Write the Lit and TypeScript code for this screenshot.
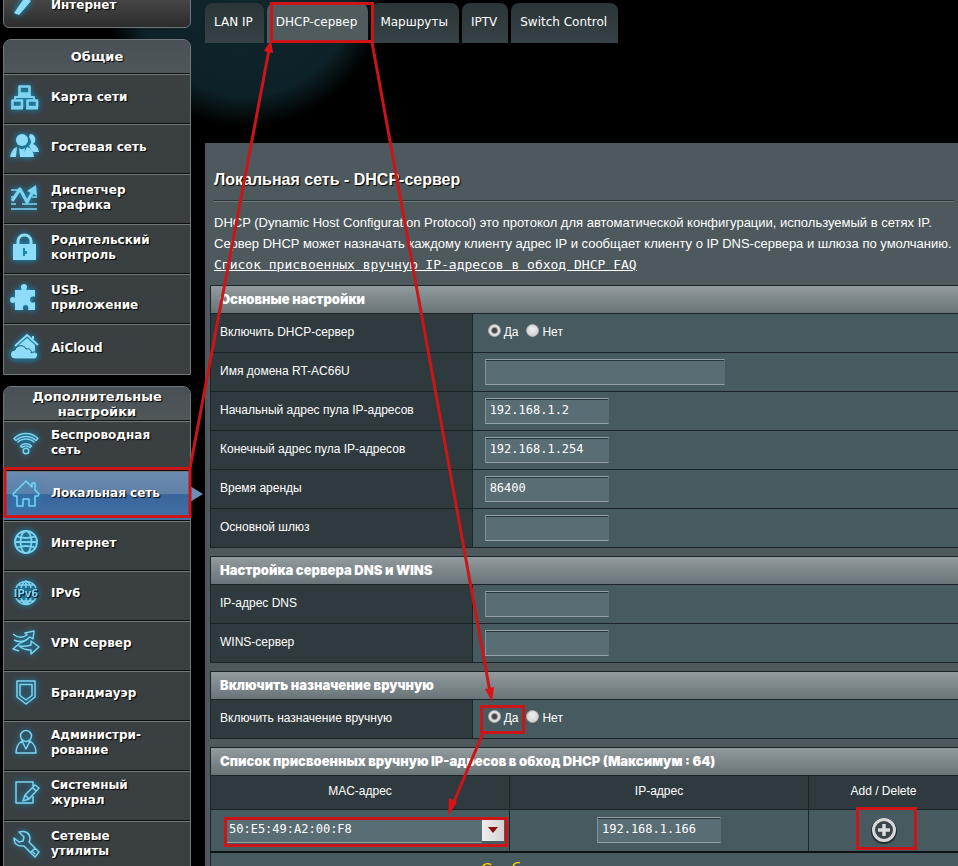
import { LitElement, html, svg, css, nothing } from "lit";
import { customElement } from "lit/decorators.js";
import { classMap } from "lit/directives/class-map.js";

const stroke = (body: unknown) => html`<svg class="icon line" viewBox="0 0 30 30" aria-hidden="true">${body}</svg>`;
const solid = (body: unknown) => html`<svg class="icon solid" viewBox="0 0 30 30" aria-hidden="true">${body}</svg>`;

const icons: Record<string, unknown> = {
  wand: solid(svg`<path d="M4 23 15 7l6 4-12 14z"/>`),
  map: stroke(svg`<path stroke-width="2.6" d="M9.500 3.500h10v7h-10zM2.500 17.500h9.500v6.500H2.500zM17.500 17.500h9.500v6.500h-9.500z"/><path stroke-width="2" d="M14.500 11v4M5 16.500v-2.500h19v2.500M1 25.500h12M16 25.500h12M8 12h13"/>`),
  guests: solid(svg`<path d="M20 1a5.500 5.500 0 0 1 3 10q5 2 6 8h-6l-4-6q4-4 0-9z"/><circle cx="12" cy="7" r="6"/><path d="M0 24q2-9 7-10l-1 10zM24 24q-1-9-7-10l-5 10z"/><path d="M9 15l3 1.500 3-1.500-1 9h-4z"/>`),
  traffic: stroke(svg`<path stroke-width="1.500" d="M1 7h7M19 7h3M1 14h4M1 21h5M12 21h15M1 26h26M22 14h5"/><path stroke-width="3.200" d="M2 18 10 6l7 13 8-14"/><path fill="currentColor" stroke="none" d="M17 8l9-6 1 11z"/>`),
  lock: solid(svg`<path fill="none" stroke="currentColor" stroke-width="3" d="M8 14V8a6.500 6 0 0 1 13 0v6"/><path fill-rule="evenodd" d="M3 11h23v16H3zM13 15v8h2v-2h2v-3h-2v-3z"/>`),
  puzzle: solid(svg`<path d="M5 7h7c-2-3-1-6 2-6s4 3 2 6h9v7c-3-1-5 0-5 2.500s2 4.500 5 2.500v8h-7c1-3 0-5-2.500-5s-3 2-2 5H5v-8c-2 2-5 1-5-2s3-4 5-2z"/>`),
  cloud: solid(svg`<path fill="none" stroke="currentColor" stroke-width="2" d="M5 13 17 2l11 10M23 3v3"/><path d="M9 12l8-7 8 7v8H9z"/><path stroke="#1d5870" d="M5 26c-6 0-6-9 0-9 1-5 9-6 11-1 4-1 6 2 5 4 5-3 8 1 6 4-1 2-2 2-4 2z"/>`),
  wifi: stroke(svg`<circle cx="15" cy="23" r="2.800"/><path d="M9.500 18a8 8 0 0 1 11 0l-1.500 1.500a6 6 0 0 0-8 0zM3 10.500a17 17 0 0 1 24 0l-2 2a14.500 14.500 0 0 0-20 0zM6.500 14.500a12 12 0 0 1 17 0"/>`),
  home: stroke(svg`<path d="M2 16 15 3l6 6V5h3v7l4 4-1 2h-3v10h-6v-7h-6v7H6V18H3z"/>`),
  globe: stroke(svg`<g stroke-width="1.800"><circle cx="15" cy="14" r="11"/><ellipse cx="15" cy="14" rx="5.500" ry="11"/><path d="M4 14h22M6 8.500q9 3 18 0M6 19.500q9-3 18 0"/></g>`),
  ipv6: stroke(svg`<path d="M5 10a11 11 0 0 1 20 0M5 20a11 11 0 0 0 20 0M15 3v7M15 20v6M10 10q1-5 5-7 4 2 5 7M10 20q1 4 5 6 4-2 5-6M7 7h16M7 23h16"/><text x="15" y="19" class="tiny" text-anchor="middle">IPv6</text>`),
  vpn: stroke(svg`<path d="M2 6q7 6 14 1l-2-2 9-2-1 8-3-2q-8 7-16 3M28 19l-8 7v-4q-7 0-12-4 6 1 12-1v-4zM9 15l-7 6 6 2M9 15q4-1 8-4"/>`),
  shield: stroke(svg`<path d="M6 3h18v16l-9 7-9-7z"/><path d="M9 6.500h12v11L15 22l-6-4.500z"/>`),
  admin: stroke(svg`<circle cx="15" cy="8" r="5.500"/><path d="M11 13q-6 4-6 12h20q0-8-6-12l-4 8z"/>`),
  log: stroke(svg`<path d="M22 18v7H5V4h17v4"/><path d="M12 23l2-6L24 7l4 3-10 11zM14 17l4 4M21 9l4 4"/>`),
  tools: stroke(svg`<path d="M3 9l5 4 4-1 1-4-5-5q10-2 11 6 0 3-1 4l10 10-4 5-11-11Q3 18 3 9zM19 24l5-5M21 22l3 3"/>`),
};

interface Item { label: string; icon: string; active?: boolean }

const general: Item[] = [
  { label: "Карта сети", icon: "map" },
  { label: "Гостевая сеть", icon: "guests" },
  { label: "Диспетчер трафика", icon: "traffic" },
  { label: "Родительский контроль", icon: "lock" },
  { label: "USB-приложение", icon: "puzzle" },
  { label: "AiCloud", icon: "cloud" },
];

const advanced: Item[] = [
  { label: "Беспроводная сеть", icon: "wifi" },
  { label: "Локальная сеть", icon: "home", active: true },
  { label: "Интернет", icon: "globe" },
  { label: "IPv6", icon: "ipv6" },
  { label: "VPN сервер", icon: "vpn" },
  { label: "Брандмауэр", icon: "shield" },
  { label: "Администри-рование", icon: "admin" },
  { label: "Системный журнал", icon: "log" },
  { label: "Сетевые утилиты", icon: "tools" },
];

@customElement("side-menu")
class SideMenu extends LitElement {
  static styles = css`
    :host { display: block; width: 188px; flex: none; margin: -22px 0 0 3px; font: bold 12px/15px "DejaVu Sans", Verdana, sans-serif; }
    * { box-sizing: border-box; }
    .group { margin-bottom: 11px; border: 1px solid #70787b; border-radius: 8px 8px 0 0; background: #3a3f42; }
    .quick { height: 50px; border-radius: 6px; background: linear-gradient(#5a5a5a, #2c2c2c); }
    .title { margin: 0; height: 34px; display: flex; align-items: center; justify-content: center; text-align: center; padding: 0 16px; border-radius: 8px 8px 0 0; border-bottom: 1px solid #111; background: linear-gradient(#485055, #50575a); color: #fff; font-size: 13px; text-shadow: 1px 1px 1px #000; }
    .item { position: relative; height: 50px; display: flex; align-items: center; gap: 11px; padding: 0 8px 3px 6px; border-top: 1px solid #70787b; border-bottom: 1px solid #0c0f10; color: #fff; text-decoration: none; text-shadow: 1px 1px 1px #000; }
    .item:last-child { border-bottom: 0; }
    .quick .item { height: 48px; border: 0; padding: 4px 8px 0 6px; }
    .advanced .item { padding: 0 8px 6px 7px; gap: 10px; }
    .active { background: linear-gradient(#6c8bb0 0, #5f80a8 46%, #37659c 47%, #4470a5 100%); }
    .active::after { content: ""; position: absolute; left: 100%; top: 14px; border: 8px solid transparent; border-left: 13px solid #6a8fbb; }
    .label { width: 116px; overflow-wrap: break-word; }
    .icon { width: 30px; height: 30px; flex: none; filter: drop-shadow(0 0 3px #0aa0dc); overflow: visible; }
    .line { fill: none; stroke: #7fd3ef; stroke-width: 1.5; color: #7fd3ef; stroke-linejoin: round; }
    .solid { fill: #8fdcf8; color: #8fdcf8; }
    .tiny { font: bold 10px "DejaVu Sans", sans-serif; fill: #7fd3ef; stroke: none; }
  `;
  item(i: Item) {
    return html`<a href="#" class=${classMap({ item: true, active: !!i.active })} aria-current=${i.active ? "page" : nothing}>${icons[i.icon]}<span class="label">${i.label}</span></a>`;
  }
  render() {
    return html`
      <div class="group quick">${this.item({ label: "Интернет", icon: "wand" })}</div>
      <nav class="group"><h2 class="title">Общие</h2>${general.map((i) => this.item(i))}</nav>
      <nav class="group advanced"><h2 class="title">Дополнительные настройки</h2>${advanced.map((i) => this.item(i))}</nav>
    `;
  }
}

@customElement("dhcp-page")
class DhcpPage extends LitElement {
  static styles = css`
    :host { display: block; flex: 1; min-width: 0; color: #fff; font: 12px/15px "Liberation Sans", Arial, sans-serif; }
    * { box-sizing: border-box; }
    .tabs { display: flex; gap: 3px; padding-top: 3px; margin-bottom: 100px; }
    .tab { height: 40px; padding: 0 11px 2px 9px; display: flex; align-items: center; border-radius: 8px 8px 0 0; background: linear-gradient(#2b3538, #364246); color: #fff; text-decoration: none; font: 12px "DejaVu Sans", Verdana, sans-serif; }
    .current { background: #505b5e; }
    .panel { background: #4d595d; padding: 26px 0 60px 5px; }
    .title { margin: 0 4px; padding-bottom: 10px; font-size: 16px; line-height: 21px; text-shadow: 1px 1px 1px #000; border-bottom: 1px solid #2d3639; box-shadow: 0 1px #6c777a; }
    .intro { margin: 11px 0 10px 4px; font-size: 13px; line-height: 21px; white-space: nowrap; }
    .faq { color: #fff; font: 13px/21px "DejaVu Sans Mono", monospace; }
    .grid { width: 100%; table-layout: fixed; border-collapse: collapse; margin-bottom: 8px; background: #475a5f; }
    .grid caption { height: 28px; padding: 0 9px; text-align: left; font: 900 13px/27px Inter, "Arial Black", sans-serif; background: linear-gradient(#929b9e, #687478); border: 1px solid #1b2427; border-bottom: 0; border-right: 0; }
    .grid th, .grid td { height: 39px; border: 1px solid #1b2427; border-right: 0; padding: 0; }
    .grid th { width: 35%; padding: 0 9px 2px; text-align: left; font-weight: normal; background: #2f3a3e; }
    .grid td { padding-left: 12px; }
    .grid.list th { width: 40%; height: 34px; text-align: center; }
    .grid.list th.last { width: 20%; }
    .grid.list td { height: 42px; padding: 0; text-align: center; }
    .grid.list .mac { text-align: left; padding-left: 13px; }
    .grid.list .none { color: #fc0; padding: 7px 0; border-top: 2px solid #0c1214; font: 16px/20px "DejaVu Sans", sans-serif; vertical-align: top; }
    .text { width: 124px; height: 26px; display: inline-block; vertical-align: middle; padding: 0 4px 3px; border: 1px solid #93a3a8; border-right-color: #596d74; border-left-color: #82949a; background: #596d74; box-shadow: inset 0 1px #27363b; color: #fff; font: 12px "DejaVu Sans Mono", monospace; outline: 0; }
    .wide { width: 240px; }
    .radios { display: flex; align-items: center; gap: 8px; padding: 0 0 2px 3px; }
    .radio { display: flex; align-items: center; gap: 3px; }
    .radio input { appearance: none; width: 13px; height: 13px; margin: 0 0 4px; border-radius: 50%; background: radial-gradient(circle at 50% 40%, #eee, #ccc); border: 1px solid #aaa; }
    .radio input:checked { background: radial-gradient(circle, #444 0 2px, #e0e0e0 4px); }
    .combo { display: flex; align-items: center; width: 280px; height: 26px; }
    .combo .text { flex: 1; min-width: 0; height: 26px; border-color: #596d74; border-bottom-color: #93a3a8; box-shadow: none; }
    .drop { width: 22px; padding: 0; border: 0; background: linear-gradient(90deg, #eee, #d3d3d3); height: 22px; }
    .drop svg { display: block; margin: auto; }
    .add { border: 0; padding: 0; background: none; display: inline-block; vertical-align: middle; width: 28px; height: 28px; }
    .add svg { display: block; }
  `;
  row(id: string, label: string, value = "", wide = false) {
    return html`<tr><th scope="row"><label for=${id}>${label}</label></th><td><input id=${id} class=${classMap({ text: true, wide })} .value=${value} /></td></tr>`;
  }
  radios(name: string, label: string) {
    return html`<tr><th scope="row">${label}</th><td><div class="radios" role="radiogroup" aria-label=${label}>
      <label class="radio"><input type="radio" name=${name} checked />Да</label>
      <label class="radio"><input type="radio" name=${name} />Нет</label></div></td></tr>`;
  }
  render() {
    return html`
      <nav class="tabs">${["LAN IP", "DHCP-сервер", "Маршруты", "IPTV", "Switch Control"].map((t, i) => html`<a href="#" class=${classMap({ tab: true, current: i === 1 })}>${t}</a>`)}</nav>
      <main class="panel">
        <h1 class="title">Локальная сеть - DHCP-сервер</h1>
        <p class="intro">DHCP (Dynamic Host Configuration Protocol) это протокол для автоматической конфигурации, используемый в сетях IP.<br />Сервер DHCP может назначать каждому клиенту адрес IP и сообщает клиенту о IP DNS-сервера и шлюза по умолчанию.<br /><a class="faq" href="#">Список присвоенных вручную IP-адресов в обход DHCP FAQ</a></p>
        <table class="grid"><caption>Основные настройки</caption><tbody>
          ${this.radios("dhcp", "Включить DHCP-сервер")}
          ${this.row("domain", "Имя домена RT-AC66U", "", true)}
          ${this.row("start", "Начальный адрес пула IP-адресов", "192.168.1.2")}
          ${this.row("end", "Конечный адрес пула IP-адресов", "192.168.1.254")}
          ${this.row("lease", "Время аренды", "86400")}
          ${this.row("gateway", "Основной шлюз")}
        </tbody></table>
        <table class="grid"><caption>Настройка сервера DNS и WINS</caption><tbody>
          ${this.row("dns", "IP-адрес DNS")}
          ${this.row("wins", "WINS-сервер")}
        </tbody></table>
        <table class="grid"><caption>Включить назначение вручную</caption><tbody>
          ${this.radios("manual", "Включить назначение вручную")}
        </tbody></table>
        <table class="grid list"><caption>Список присвоенных вручную IP-адресов в обход DHCP (Максимум : 64)</caption>
          <thead><tr><th scope="col">MAC-адрес</th><th scope="col">IP-адрес</th><th scope="col" class="last">Add / Delete</th></tr></thead>
          <tbody><tr>
            <td class="mac"><div class="combo"><input class="text" aria-label="MAC-адрес" .value=${"50:E5:49:A2:00:F8"} /><button class="drop" aria-label="Выбрать клиента"><svg width="12" height="8"><path d="M1 1h10L6 7z" fill="#8e0c10" /></svg></button></div></td>
            <td><input class="text" aria-label="IP-адрес" .value=${"192.168.1.166"} /></td>
            <td><button class="add" aria-label="Add"><svg width="28" height="28" viewBox="0 0 28 28"><circle cx="14" cy="15" r="11" fill="none" stroke="#222c30" stroke-width="4" /><circle cx="14" cy="14" r="10.500" fill="#39454a" stroke="#d8d8d8" stroke-width="3" /><path d="M14 8v12M8 14h12" stroke="#ddd" stroke-width="3.500" /></svg></button></td>
          </tr><tr><td colspan="3" class="none">Сообщения отсутствуют</td></tr></tbody>
        </table>
      </main>`;
  }
}

@customElement("app-root")
class AppRoot extends LitElement {
  static styles = css`
    :host { display: block; position: relative; height: 100vh; overflow: hidden; background: radial-gradient(circle at 245px -15px, #10262c 0, #0d2228 110px, #000 142px), #000; }
    .layout { display: flex; gap: 14px; align-items: flex-start; }
    .marks { position: absolute; left: 0; top: 0; width: 958px; height: 866px; pointer-events: none; }
    .mark { fill: none; stroke: #cb1519; stroke-width: 3; }
    .head { fill: #dd1216; }
  `;
  render() {
    return html`
      <div class="layout"><side-menu></side-menu><dhcp-page></dhcp-page></div>
      <svg class="marks" viewBox="0 0 958 866" aria-hidden="true">
        <path class="mark" d="M5 468.500h185v48H5zM271.500 3.500h101v38h-101zM481.500 706.500h42v26h-42zM225.500 818.500h281v27h-281zM857.500 808.500h58v40h-58z" />
        <path class="mark" d="M190 468 269 50M372 42 490 692M483 733 453 804" />
        <path class="head" d="M271 40l2 13-9-2zM492 702l-7-13 9-2zM448 816l1-18 8 4z" />
      </svg>`;
  }
}
